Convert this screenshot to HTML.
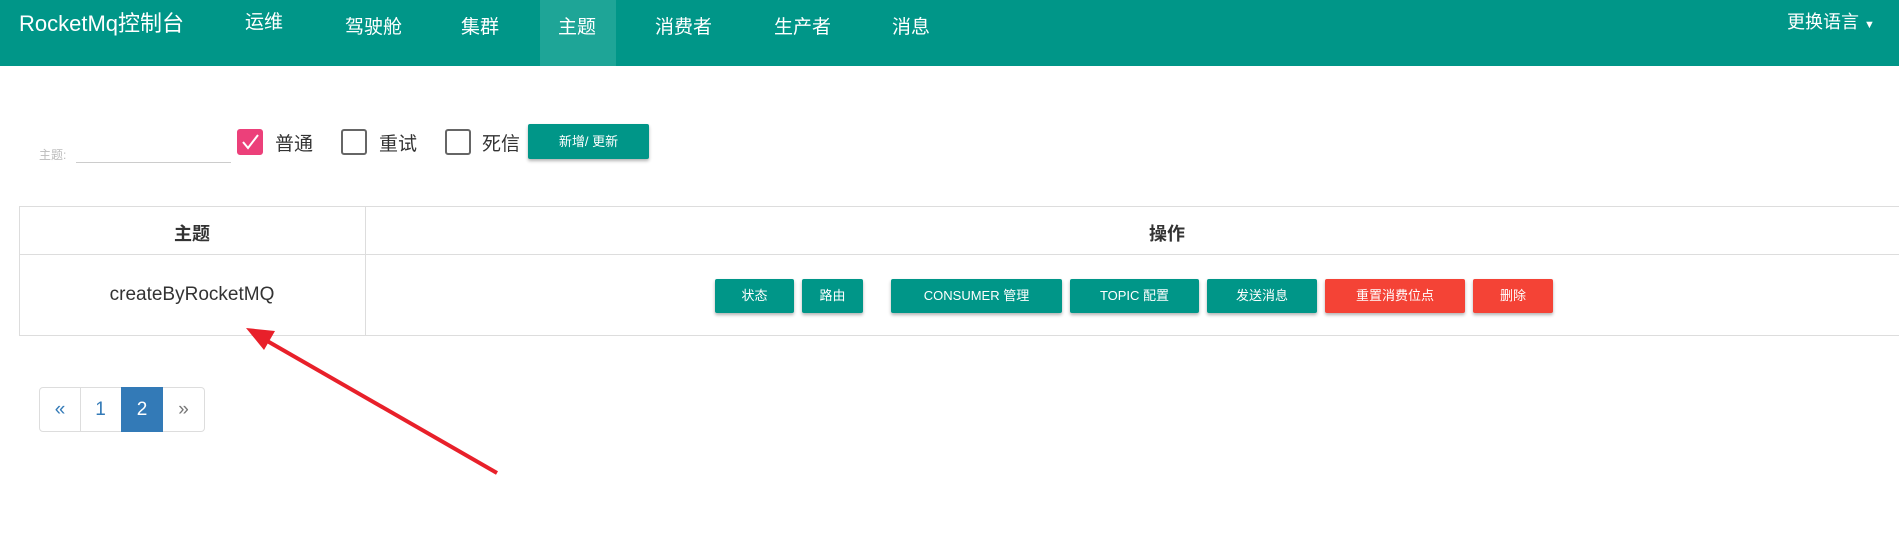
<!DOCTYPE html>
<html><head><meta charset="utf-8"><style>
*{box-sizing:border-box;margin:0;padding:0}
body{width:1899px;height:557px;overflow:hidden;background:#fff;font-family:"Liberation Sans","Noto Sans CJK SC",sans-serif;color:#333;position:relative}
.nav{position:absolute;left:0;top:0;width:1899px;height:66px;background:#009688;color:#fff}
.nav span{position:absolute;font-size:19px;line-height:1}
.act{position:absolute;left:540px;top:0;width:76px;height:66px;background:#1ea597}
.ab{position:absolute}
.cb{position:absolute;top:129px;width:26px;height:26px;border:2px solid #666;border-radius:3px}
.btn{position:absolute;top:279px;height:34px;background:#009688;color:#fff;font-size:13px;line-height:34px;text-align:center;border-radius:2px;box-shadow:0 2px 3px rgba(0,0,0,.3)}
.red{background:#f44336}
.pg{position:absolute;top:387px;width:42px;height:45px;border:1px solid #ddd;color:#337ab7;font-size:19px;line-height:43px;text-align:center}
</style></head><body>
<div class="nav">
<div class="act"></div>
<span style="left:19px;top:13px;font-size:22px">RocketMq控制台</span>
<span style="left:245px;top:13px">运维</span>
<span style="left:345px;top:18px">驾驶舱</span>
<span style="left:461px;top:18px">集群</span>
<span style="left:558px;top:18px">主题</span>
<span style="left:655px;top:18px">消费者</span>
<span style="left:774px;top:18px">生产者</span>
<span style="left:892px;top:18px">消息</span>
<span style="left:1787px;top:13px;font-size:18px">更换语言 <span style="position:static;font-size:11px">▼</span></span>
</div>
<div class="ab" style="left:39px;top:146px;font-size:12px;color:#bbb">主题:</div>
<div class="ab" style="left:76px;top:162px;width:155px;border-top:1px solid #ccc"></div>
<div class="cb" style="left:237px;background:#ec407a;border-color:#ec407a"><svg width="22" height="22" viewBox="0 0 22 22"><path d="M4 11 L9 17 L19 4" stroke="#fff" stroke-width="2" fill="none"/></svg></div>
<div class="ab" style="left:275px;top:129px;font-size:19px">普通</div>
<div class="cb" style="left:341px"></div>
<div class="ab" style="left:379px;top:129px;font-size:19px">重试</div>
<div class="cb" style="left:445px"></div>
<div class="ab" style="left:482px;top:129px;font-size:19px">死信</div>
<div class="btn" style="left:528px;top:124px;width:121px;height:35px;line-height:35px">新增/ 更新</div>
<div class="ab" style="left:19px;top:206px;width:1890px;height:130px;border:1px solid #ddd"></div>
<div class="ab" style="left:19px;top:254px;width:1880px;border-top:1px solid #ddd"></div>
<div class="ab" style="left:365px;top:206px;height:130px;border-left:1px solid #ddd"></div>
<div class="ab" style="left:174px;top:220px;font-size:18px;font-weight:bold">主题</div>
<div class="ab" style="left:1149px;top:220px;font-size:18px;font-weight:bold">操作</div>
<div class="ab" style="left:19px;top:284px;width:346px;text-align:center;font-size:19px">createByRocketMQ</div>
<div class="btn" style="left:715px;width:79px">状态</div>
<div class="btn" style="left:802px;width:61px">路由</div>
<div class="btn" style="left:891px;width:171px">CONSUMER 管理</div>
<div class="btn" style="left:1070px;width:129px">TOPIC 配置</div>
<div class="btn" style="left:1207px;width:110px">发送消息</div>
<div class="btn red" style="left:1325px;width:140px">重置消费位点</div>
<div class="btn red" style="left:1473px;width:80px">删除</div>
<div class="pg" style="left:39px;border-radius:4px 0 0 4px">«</div>
<div class="pg" style="left:80px;border-left:none">1</div>
<div class="pg" style="left:121px;background:#337ab7;color:#fff;border-color:#337ab7">2</div>
<div class="pg" style="left:163px;border-left:none;border-radius:0 4px 4px 0;color:#777">»</div>
<svg class="ab" style="left:0;top:0" width="1899" height="557"><line x1="497" y1="473" x2="262" y2="338" stroke="#e8202a" stroke-width="4"/><polygon points="246,328 275,331 264,350" fill="#e8202a"/></svg>
</body></html>
